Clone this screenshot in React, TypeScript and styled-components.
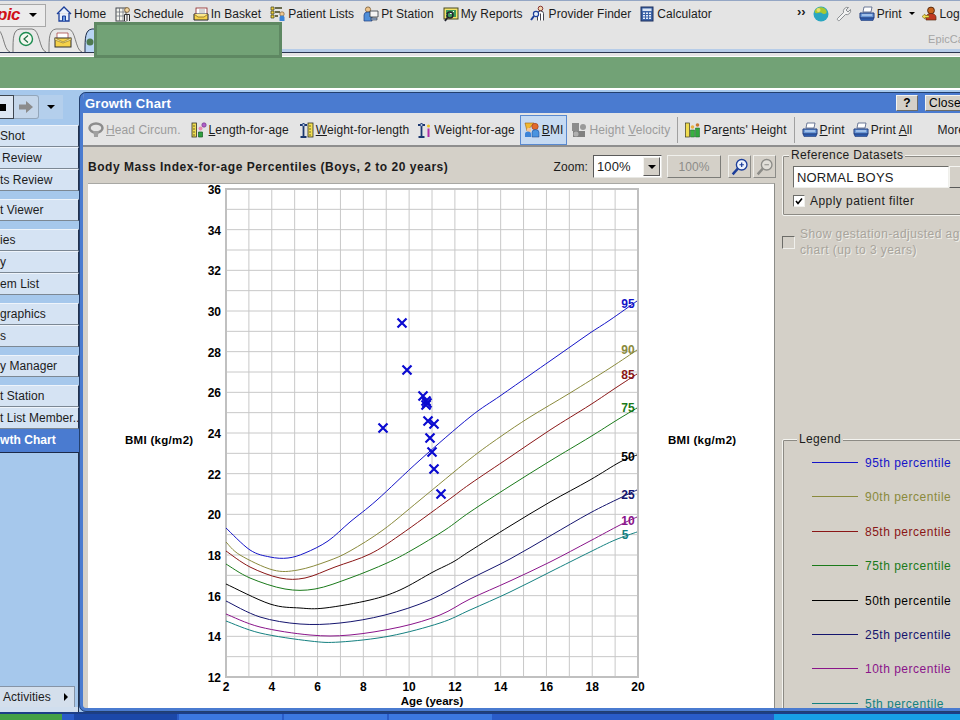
import type { ReactNode } from "react";
import styled, { createGlobalStyle } from "styled-components";

const GlobalStyle = createGlobalStyle`
  html, body {
    margin: 0;
    padding: 0;
    background: #ffffff;
  }
  * {
    box-sizing: border-box;
  }
`;

const Page = styled.div`
  position: relative;
  display: flex;
  flex-direction: column;
  width: 960px;
  height: 720px;
  overflow: hidden;
  font-family: "Liberation Sans", Arial, sans-serif;
  font-size: 12px;
  letter-spacing: 0.1px;
  color: #1c1c1c;
`;

const TopBar = styled.header`
  flex: none;
  height: 57px;
  background: #e4e4e4;
  border-top: 1px solid #94a6c4;
  border-bottom: 1px solid #ffffff;
  display: flex;
  flex-direction: column;
`;

const ToolRow = styled.div`
  height: 25px;
  display: flex;
  align-items: center;
  letter-spacing: 0.05px;
`;

const LogoButton = styled.div`
  flex: none;
  width: 46px;
  height: 23px;
  margin-top: 3px;
  display: flex;
  align-items: center;
  justify-content: space-between;
  padding-right: 8px;
  border: 1px solid #a8a8a8;
  border-left: 0;
  background: #ececec;
  overflow: hidden;
`;

const LogoText = styled.span`
  margin-left: -3px;
  color: #d01018;
  font-size: 17px;
  font-weight: 700;
  font-style: italic;
  letter-spacing: -0.5px;
`;

const Caret = styled.span<{ $size?: number; $color?: string }>`
  flex: none;
  width: 0;
  height: 0;
  border-left: ${({ $size }) => $size ?? 4}px solid transparent;
  border-right: ${({ $size }) => $size ?? 4}px solid transparent;
  border-top: ${({ $size }) => $size ?? 4}px solid ${({ $color }) => $color ?? "#000"};
`;

const NavItems = styled.nav`
  display: flex;
  align-items: center;
  gap: 9px;
  margin-left: 10px;
`;

const NavItem = styled.span<{ $pull?: number }>`
  display: flex;
  align-items: center;
  gap: 2px;
  margin-left: ${({ $pull }) => -($pull ?? 0)}px;
  white-space: nowrap;
`;

const RightTools = styled.div`
  display: flex;
  align-items: center;
  gap: 7px;
  margin-left: 85px;
  white-space: nowrap;
`;

const Chevrons = styled.span`
  font-weight: 700;
  font-size: 13px;
  margin-top: -4px;
`;

const TabRow = styled.div`
  position: relative;
  flex: 1;
  display: flex;
  align-items: flex-end;
`;

const Tabs = styled.div`
  display: flex;
  align-items: flex-end;
  gap: 2px;
  height: 25px;
  margin-left: -10px;
  margin-bottom: 3px;
  border-bottom: 1px solid #2a3550;
`;

const AppName = styled.span`
  position: absolute;
  left: 928px;
  top: 7px;
  color: #a4a4a4;
  font-size: 11px;
  white-space: nowrap;
`;

const TabRule = styled.div`
  flex: 1;
  height: 4px;
  margin-bottom: 3px;
  background: #b6cce8;
  border-bottom: 1px solid #2a3550;
`;

const GreenBand = styled.div`
  flex: none;
  height: 33px;
  background: #72a276;
  border-bottom: 2px solid #ffffff;
`;

const Redaction = styled.div`
  position: absolute;
  left: 94px;
  top: 22px;
  width: 188px;
  height: 36px;
  background: #72a276;
  border: 3px solid #5e8862;
`;

const Main = styled.main`
  flex: 1;
  min-height: 0;
  display: flex;
  background: #a6c8ec;
`;

const Sidebar = styled.aside`
  flex: none;
  width: 79px;
  display: flex;
  flex-direction: column;
  letter-spacing: 0.05px;
`;

const NavStrip = styled.div`
  height: 35px;
  padding-top: 5px;
  display: flex;
  align-items: flex-start;
`;

const StripGroup = styled.div`
  width: 63px;
  height: 24px;
  display: flex;
  align-items: center;
  background: #b4cfec;
`;

const BackButton = styled.span`
  width: 14px;
  height: 24px;
  display: flex;
  align-items: center;
  background: #dce6f2;
  border: 1px solid #3e4650;
  border-left: 0;
`;

const StopMark = styled.span`
  width: 6px;
  height: 7px;
  background: #000;
`;

const ForwardButton = styled.span`
  width: 25px;
  height: 24px;
  display: flex;
  align-items: center;
  justify-content: center;
  background: #c4d6ea;
  border: 1px solid #93a6ba;
  border-left: 0;
  border-radius: 0 3px 3px 0;
`;

const StripCaret = styled.span`
  margin-left: 8px;
  display: flex;
`;

const SideGroup = styled.div`
  display: flex;
  flex-direction: column;
  margin-bottom: 8px;
`;

const SideItem = styled.div<{ $indent?: number }>`
  height: 22px;
  display: flex;
  align-items: center;
  padding-left: ${({ $indent }) => $indent ?? 0}px;
  background: #d5e3f3;
  border-top: 1px solid #eef4fb;
  border-bottom: 1px solid #7c8894;
  border-right: 1px solid #23324e;
  white-space: nowrap;
  overflow: hidden;
`;

const SideActive = styled.div`
  height: 23px;
  margin-top: -8px;
  padding-bottom: 2px;
  display: flex;
  align-items: center;
  background: #4a7bd0;
  color: #ffffff;
  font-weight: 700;
`;

const SideFill = styled.div`
  flex: 1;
  display: flex;
  flex-direction: column;
  justify-content: flex-end;
  border-top: 1px solid #1c2a48;
  border-right: 1px solid #23324e;
  background: #a6c8ec;
`;

const ActivitiesButton = styled.div`
  width: 75px;
  height: 21px;
  padding: 0 6px 0 3px;
  display: flex;
  align-items: center;
  justify-content: space-between;
  background: #d4dfec;
  border-top: 1px solid #8694a6;
  border-right: 1px solid #8694a6;
`;

const ArrowRight = styled.span`
  width: 0;
  height: 0;
  border-top: 4px solid transparent;
  border-bottom: 4px solid transparent;
  border-left: 4px solid #000;
`;

const SideFoot = styled.div`
  height: 5px;
  background: #d0deee;
`;

const GrowthWindow = styled.section`
  flex: none;
  width: 900px;
  margin-top: 2px;
  display: flex;
  flex-direction: column;
  border: 4px solid #4a7bd0;
  border-right: 0;
  border-top: 0;
  border-radius: 7px 0 0 7px;
  outline: 1px solid #23406e;
  outline-offset: -1px;
  background: #d4d0c8;
  overflow: hidden;
`;

const TitleBar = styled.div`
  flex: none;
  height: 21px;
  padding: 0 14px 0 2px;
  display: flex;
  align-items: center;
  background: #4a7bd0;
  color: #ffffff;
  font-size: 13px;
  font-weight: 700;
  letter-spacing: 0.25px;
`;

const TitleText = styled.span`
  flex: 1;
  padding-top: 2px;
`;

const TitleButton = styled.span<{ $wide?: boolean }>`
  width: ${({ $wide }) => ($wide ? 40 : 22)}px;
  height: 16px;
  margin-left: 7px;
  display: flex;
  align-items: center;
  justify-content: center;
  background: #d4d0c8;
  border: 1px solid #f4f4f0;
  border-right-color: #6c6c68;
  border-bottom-color: #6c6c68;
  color: #000;
  font-size: 12px;
  font-weight: ${({ $wide }) => ($wide ? 400 : 700)};
`;

const ChartToolbar = styled.div`
  flex: none;
  height: 34px;
  padding: 1px 0 0 5px;
  display: flex;
  align-items: center;
  background: #e4e4e4;
  border-bottom: 2px solid #8e8e8e;
  white-space: nowrap;
`;

const ChartTool = styled.span<{ $off?: boolean; $active?: boolean; $left?: number }>`
  height: 30px;
  margin-left: ${({ $left }) => $left ?? 8}px;
  padding: ${({ $active }) => ($active ? "0 4px" : "0")};
  display: flex;
  align-items: center;
  gap: 2px;
  color: ${({ $off }) => ($off ? "#9c9c9c" : "#1c1c1c")};
  background: ${({ $active }) => ($active ? "#c6daf2" : "transparent")};
  outline: ${({ $active }) => ($active ? "1px solid #5a8ad0" : "none")};
  outline-offset: -1px;
`;

const ToolDivider = styled.span`
  width: 1px;
  height: 26px;
  margin-left: 7px;
  background: #a0a0a0;
`;

const Content = styled.div`
  flex: 1;
  min-height: 0;
  display: flex;
`;

const ChartColumn = styled.div`
  flex: none;
  width: 693px;
  padding-left: 5px;
  display: flex;
  flex-direction: column;
`;

const ChartHeader = styled.div`
  flex: none;
  height: 36px;
  display: flex;
  align-items: center;
  padding-top: 3px;
`;

const ChartTitle = styled.h1`
  flex: 1;
  margin: 0;
  font-size: 12px;
  font-weight: 700;
  letter-spacing: 0.53px;
`;

const ZoomLabel = styled.span`
  margin-right: 5px;
`;

const ZoomSelect = styled.div`
  width: 69px;
  height: 23px;
  display: flex;
  align-items: center;
  justify-content: space-between;
  padding: 1px 1px 1px 3px;
  background: #fff;
  border: 1px solid #5a5a5a;
  border-right-color: #e8e8e4;
  border-bottom-color: #e8e8e4;
  font-size: 13px;
`;

const SelectArrow = styled.span`
  width: 17px;
  height: 19px;
  display: flex;
  align-items: center;
  justify-content: center;
  background: #d4d0c8;
  border: 1px solid #f4f4f0;
  border-right-color: #5a5a5a;
  border-bottom-color: #5a5a5a;
`;

const ZoomValue = styled.span`
  width: 54px;
  height: 23px;
  margin-left: 5px;
  display: flex;
  align-items: center;
  justify-content: center;
  color: #8c8c88;
  background: #d4d0c8;
  border: 1px solid #f0f0ec;
  border-right-color: #7c7c78;
  border-bottom-color: #7c7c78;
`;

const ZoomButton = styled.span<{ $first?: boolean }>`
  width: 23px;
  height: 23px;
  margin-left: ${({ $first }) => ($first ? 7 : 2)}px;
  display: flex;
  align-items: center;
  justify-content: center;
  border: 1px solid #f0f0ec;
  border-right-color: #8c8c88;
  border-bottom-color: #8c8c88;
`;

const ChartPanel = styled.div`
  flex: 1;
  min-height: 0;
  width: 687px;
  background: #ffffff;
  border-top: 1px solid #a8a8a4;
  border-right: 1px solid #8c8c88;
`;

const ChartSvg = styled.svg`
  display: block;
  font-family: "Liberation Sans", Arial, sans-serif;
  letter-spacing: 0;
`;

const SidePanel = styled.div`
  flex: none;
  width: 190px;
  padding-left: 6px;
  display: flex;
  flex-direction: column;
`;

const GroupBox = styled.div<{ $top: number }>`
  position: relative;
  flex: none;
  margin-top: ${({ $top }) => $top}px;
  border: 1px solid #f4f4f0;
  outline: 1px solid #8c8a84;
  outline-offset: -2px;
  border-radius: 2px;
`;

const GroupLabel = styled.span<{ $left: number }>`
  position: absolute;
  top: -7px;
  left: ${({ $left }) => $left}px;
  padding: 0 2px;
  line-height: 13px;
  background: #d4d0c8;
  white-space: nowrap;
  letter-spacing: 0.35px;
`;

const DatasetBox = styled(GroupBox)`
  height: 61px;
  padding: 10px 0 0 10px;
`;

const DatasetRow = styled.div`
  display: flex;
`;

const DatasetInput = styled.div`
  width: 163px;
  height: 22px;
  padding-left: 3px;
  display: flex;
  align-items: center;
  background: #fff;
  border: 1px solid #6c6c68;
  border-right-color: #f0f0ec;
  border-bottom-color: #f0f0ec;
  font-size: 13px;
  letter-spacing: 0.15px;
`;

const DatasetArrow = styled.span`
  width: 17px;
  height: 22px;
  background: #d4d0c8;
  border: 1px solid #f4f4f0;
  border-right-color: #5a5a5a;
  border-bottom-color: #5a5a5a;
`;

const CheckRow = styled.label<{ $off?: boolean }>`
  display: flex;
  align-items: ${({ $off }) => ($off ? "flex-start" : "center")};
  gap: ${({ $off }) => ($off ? 5 : 5)}px;
  margin-top: ${({ $off }) => ($off ? 0 : 7)}px;
  color: ${({ $off }) => ($off ? "#a8a49c" : "#1c1c1c")};
  text-shadow: ${({ $off }) => ($off ? "1px 1px 0 #efefea" : "none")};
  line-height: 12px;
  white-space: nowrap;
  letter-spacing: 0.45px;
`;

const DisabledOption = styled.div`
  margin-top: 10px;
`;

const DisabledText = styled.span`
  line-height: 16px;
`;

const CheckSquare = styled.span<{ $off?: boolean }>`
  flex: none;
  width: ${({ $off }) => ($off ? 13 : 12)}px;
  height: ${({ $off }) => ($off ? 13 : 12)}px;
  margin-top: ${({ $off }) => ($off ? 10 : 0)}px;
  display: flex;
  align-items: center;
  justify-content: center;
  background: ${({ $off }) => ($off ? "#d4d0c8" : "#ffffff")};
  border: 1px solid #6c6c68;
  border-right-color: #f0f0ec;
  border-bottom-color: #f0f0ec;
`;

const LegendBox = styled(GroupBox)`
  height: 320px;
  padding: 16px 0 0 29px;
`;

const LegendRow = styled.div<{ $color: string }>`
  height: 34.4px;
  display: flex;
  align-items: flex-start;
  gap: 7px;
  line-height: 14px;
  white-space: nowrap;
  letter-spacing: 0.5px;
  color: ${({ $color }) => $color};
`;

const LegendLine = styled.span`
  width: 46px;
  height: 1px;
  margin-top: 6px;
  background: currentColor;
`;

const Taskbar = styled.footer`
  flex: none;
  height: 8px;
  display: flex;
  gap: 2px;
  background: #2a5cc8;
  border-top: 2px solid #1c3e86;
`;

const StartButton = styled.span`
  width: 62px;
  background: #45a045;
`;

const TaskButton = styled.span<{ $dark?: boolean }>`
  width: 103px;
  margin-left: ${({ $dark }) => ($dark ? 10 : 0)}px;
  background: ${({ $dark }) => ($dark ? "#1c48a8" : "#3c78e0")};
`;

const TrayArea = styled.span`
  margin-left: auto;
  width: 186px;
  background: #18a0e6;
`;

type IconProps = { size?: number; children: ReactNode; box?: string };

function Ico({ size = 16, children, box = "0 0 16 16" }: IconProps) {
  return (
    <svg width={size} height={size} viewBox={box} style={{ flex: "none" }}>
      {children}
    </svg>
  );
}

const HomeIcon = () => (
  <Ico>
    <path d="M1 8 8 1l7 7M3 7v8h10V7" fill="#e8f0fa" stroke="#1a3e9a" strokeWidth="1.3" />
    <path d="M6.5 15v-5h3v5" fill="#6a9ae0" stroke="#1a3e9a" />
  </Ico>
);

const ScheduleIcon = () => (
  <Ico>
    <rect x="1" y="2" width="10" height="13" fill="#f4f4ee" stroke="#44484e" />
    <path d="M1 6h10M1 10h10M4.5 2v13M8 2v13" stroke="#70757c" strokeWidth=".8" />
    <circle cx="12" cy="4" r="2.4" fill="#f2d6a0" stroke="#6a4a20" strokeWidth=".8" />
    <path d="M9.5 15V8.5h5V15M12 9v6" fill="#f4f4f4" stroke="#303030" />
  </Ico>
);

const BasketIcon = () => (
  <Ico>
    <rect x="3" y="2" width="11" height="8" fill="#ffffff" stroke="#8a2020" strokeWidth=".8" />
    <path d="M6 4h6M6 6h6" stroke="#8a8a8a" strokeWidth=".7" />
    <path d="M1 8h14v6H1z" fill="#f6d24a" stroke="#24242c" />
    <path d="M1 8l4 3h6l4-3" fill="#fbe78a" stroke="#7a5a10" strokeWidth=".7" />
  </Ico>
);

const ListsIcon = () => (
  <Ico>
    <path d="M1 1h3v3H1zM1 5h3v3H1zM1 9h3v3H1z" fill="#f0d040" stroke="#40401a" strokeWidth=".7" />
    <path d="M5 2h7M5 6h5M5 10h3" stroke="#40401a" strokeWidth="1.6" />
    <circle cx="12" cy="8" r="2.2" fill="#f0c890" stroke="#6a4a20" strokeWidth=".6" />
    <path d="M9.5 15v-3.5a2.5 2 0 0 1 5 0V15z" fill="#3c84d8" />
  </Ico>
);

const StationIcon = () => (
  <Ico>
    <circle cx="5" cy="3.5" r="2.6" fill="#eec48c" stroke="#6a4a20" strokeWidth=".7" />
    <path d="M1 15V9a4 3 0 0 1 8 0v6z" fill="#4f8ed8" stroke="#1c3e80" strokeWidth=".7" />
    <path d="M7 5h8v6H7z" fill="#f4f4f4" stroke="#303840" strokeWidth=".8" />
    <path d="M8 12h6v2H8z" fill="#9ab4d8" stroke="#303840" strokeWidth=".6" />
  </Ico>
);

const ReportsIcon = () => (
  <Ico>
    <rect x="1" y="2" width="14" height="11" fill="#f4e46a" stroke="#4a4a20" />
    <rect x="3" y="4" width="10" height="7" fill="#3c9a5a" />
    <path d="M3 9l3-3 2 2 3-3" stroke="#ffffff" fill="none" />
    <circle cx="7" cy="9" r="3" fill="none" stroke="#20202c" strokeWidth="1.4" />
    <path d="M4.500 11.500 2 15" stroke="#20202c" strokeWidth="1.8" />
  </Ico>
);

const FinderIcon = () => (
  <Ico box="0 0 17 16" size={17}>
    <circle cx="10.500" cy="3" r="2.300" fill="#f4d8b0" stroke="#7a2020" strokeWidth=".9" />
    <path d="M7.500 15V8a3 2.500 0 0 1 6 0v7M10.500 8v7" fill="#fff" stroke="#30303a" strokeWidth=".9" />
    <circle cx="6" cy="8.500" r="2.600" fill="#e8f0fa" stroke="#1c3e9a" strokeWidth="1.200" />
    <path d="M4 10.500 1 14.500" stroke="#1c3e9a" strokeWidth="2" />
  </Ico>
);

const CalculatorIcon = () => (
  <Ico box="0 0 14 16" size={16}>
    <rect x="1" y="1" width="12" height="14" fill="#3c64a8" stroke="#1c2e5c" />
    <rect x="2.500" y="2.500" width="9" height="2.500" fill="#dce6f4" />
    <path d="M3 6.500h2v1.500H3zM6 6.500h2v1.500H6zM9 6.500h2v1.500H9zM3 9h2v1.500H3zM6 9h2v1.500H6zM9 9h2v1.500H9zM3 11.500h2V13H3zM6 11.500h2V13H6zM9 11.500h2V13H9z" fill="#e8eef8" />
  </Ico>
);

const GlobeIcon = () => (
  <Ico>
    <circle cx="8" cy="8" r="7.500" fill="#2aa6c0" />
    <path d="M4 2.500c3-2 8-1.500 9.500 2.500 .7 2-.5 3-2.500 3S9 6 7 6.500 3 8 2 6.500 2.500 3.500 4 2.500z" fill="#a8c830" />
    <circle cx="5.500" cy="4" r="2" fill="#e8e070" />
  </Ico>
);

const WrenchIcon = () => (
  <Ico>
    <path d="M14.500 3.500 12 6l-2-2 2.500-2.500a4 4 0 0 0-5 5L1.500 12.500a1.500 1.500 0 0 0 2 2l6-6a4 4 0 0 0 5-5z" fill="#f2f2f2" stroke="#808488" strokeWidth=".9" />
  </Ico>
);

const PrinterIcon = () => (
  <Ico>
    <path d="M5 1h8l-1 5H4z" fill="#ffffff" stroke="#4a5a80" strokeWidth=".8" />
    <path d="M1 7h14v5H1z" fill="#6c9ad8" stroke="#1e3a7c" />
    <path d="M1 12h14l-1 2.500H2z" fill="#2e5cac" stroke="#1e3a7c" strokeWidth=".6" />
    <path d="M3 9h10" stroke="#d4e4f8" />
  </Ico>
);

const LogoutIcon = () => (
  <Ico>
    <circle cx="9" cy="4.500" r="3.400" fill="#c8641c" stroke="#5a2c10" />
    <path d="M4 14V11a5 3.500 0 0 1 10 0v3z" fill="#c03820" stroke="#5a2c10" strokeWidth=".7" />
    <path d="M0 10.500 3 8v1.500h4v2H3V13z" fill="#f4e050" stroke="#7a6a10" strokeWidth=".6" />
  </Ico>
);

const HeadIcon = () => (
  <Ico>
    <ellipse cx="8" cy="6" rx="6.500" ry="4.500" fill="none" stroke="#8c8c8c" strokeWidth="2.500" />
    <path d="M5 9c1 3 1 5 1 6h4c0-1 0-3 1-6" fill="#a0a0a0" />
  </Ico>
);

const LengthIcon = () => (
  <Ico>
    <rect x="1" y="1" width="4.500" height="14" fill="#f0dc50" stroke="#303020" strokeWidth=".8" />
    <path d="M2 4h2M2 7h2M2 10h2M2 13h2" stroke="#303020" strokeWidth=".7" />
    <circle cx="13" cy="3" r="2.200" fill="#b060c8" stroke="#6a2a80" strokeWidth=".6" />
    <circle cx="9.500" cy="6.500" r="2" fill="#e88ab0" />
    <path d="M7.500 15v-5h4v5z" fill="#30a040" stroke="#145c20" strokeWidth=".7" />
  </Ico>
);

const ScaleIcon = ({ tall }: { tall?: boolean }) => (
  <Ico>
    <path d="M2 3h7M5.500 1v13M2.500 15h6" stroke="#1c3870" strokeWidth="1.800" fill="none" />
    <circle cx="5.500" cy="3" r="1.300" fill="#c0d4f0" stroke="#1c3870" strokeWidth=".6" />
    {tall ? (
      <>
        <circle cx="12.500" cy="4" r="1.500" fill="#e8c020" />
        <path d="M11.500 6.500h2V15h-2z" fill="#b02ca8" />
      </>
    ) : (
      <>
        <rect x="10" y="1" width="5" height="14" fill="#f4e050" stroke="#303020" strokeWidth=".8" />
        <path d="M11 4h2M11 7h2M11 10h2M11 13h2" stroke="#303020" strokeWidth=".7" />
      </>
    )}
  </Ico>
);

const BmiIcon = () => (
  <Ico>
    <path d="M1 1h9L3 9z" fill="#f0b830" stroke="#a06010" strokeWidth=".6" />
    <circle cx="11" cy="4.500" r="3.200" fill="#e06a2c" stroke="#a03818" strokeWidth=".6" />
    <circle cx="5" cy="8" r="2.200" fill="#f4c49a" />
    <path d="M1 15v-3a3 2.500 0 0 1 6 0v3z" fill="#3c84d8" />
    <path d="M8 15v-4.500a3 2.500 0 0 1 7 0V15z" fill="#4a94e0" stroke="#1c3e80" strokeWidth=".5" />
  </Ico>
);

const VelocityIcon = () => (
  <Ico>
    <rect x="1" y="1" width="7" height="8" fill="#8c8c8c" />
    <circle cx="12" cy="5" r="3" fill="#9a9a9a" />
    <path d="M2 15v-6h12v6z" fill="#808080" />
    <circle cx="5" cy="12" r="2.500" fill="#b0b0b0" />
  </Ico>
);

const ParentsIcon = () => (
  <Ico>
    <rect x="0.500" y="1" width="4" height="14" fill="#f0dc50" stroke="#3a3a20" strokeWidth=".7" />
    <circle cx="7.500" cy="5" r="1.800" fill="#e8b040" />
    <path d="M5.500 15V8h4v7z" fill="#38b040" stroke="#145c20" strokeWidth=".5" />
    <circle cx="12.500" cy="3" r="1.800" fill="#c87830" />
    <path d="M10.500 15V6h4v9z" fill="#30a83c" stroke="#145c20" strokeWidth=".5" />
  </Ico>
);

const ZoomIcon = ({ plus }: { plus?: boolean }) => {
  const color = plus ? "#1c3e9a" : "#8c8c88";
  return (
    <Ico size={18}>
      <circle cx="9.500" cy="6" r="4.700" fill={plus ? "#eef4fc" : "#e0ded8"} stroke={color} strokeWidth="1.200" />
      <path d="M6 9.500 1.500 14.500" stroke={color} strokeWidth="2.200" />
      <path d={plus ? "M7.500 6h4M9.500 4v4" : "M7.500 6h4"} stroke={color} strokeWidth="1.100" />
    </Ico>
  );
};

const navItems = [
  { label: "Home", icon: <HomeIcon /> },
  { label: "Schedule", icon: <ScheduleIcon /> },
  { label: "In Basket", icon: <BasketIcon /> },
  { label: "Patient Lists", icon: <ListsIcon /> },
  { label: "Pt Station", icon: <StationIcon /> },
  { label: "My Reports", icon: <ReportsIcon /> },
  { label: "Provider Finder", icon: <FinderIcon />, pull: 2 },
  { label: "Calculator", icon: <CalculatorIcon />, pull: 1 }
];

const sideGroups: { label: string; indent?: number }[][] = [
  [{ label: "Shot" }, { label: "Review", indent: 2 }, { label: "ts Review" }],
  [{ label: "t Viewer" }],
  [{ label: "ies" }, { label: "y" }, { label: "em List" }],
  [{ label: "graphics" }, { label: "s" }],
  [{ label: "y Manager" }],
  [{ label: "t Station" }, { label: "t List Member..." }]
];

// page coordinates of the curves, read off the reference
const curves = [
  {
    tag: "95",
    color: "#1414c8",
    labelX: 628,
    labelY: 304,
    pts: "226,528 250,550 270,557 288,558 305,553 328,541 350,522 377,500 420,460 470,417 500,396 530,375 550,361 570,347 590,333 610,320 637,301"
  },
  {
    tag: "90",
    color: "#8a8a3c",
    labelX: 628,
    labelY: 350,
    pts: "226,542 240,555 273,570 298,570 328,561 350,551 383,530 420,500 470,459 500,437 530,417 570,393 610,368 637,350"
  },
  {
    tag: "85",
    color: "#8a1616",
    labelX: 628,
    labelY: 375,
    pts: "226,551 250,567 280,578 305,578 335,567 370,554 400,535 447,501 470,484 510,457 550,430 590,405 617,387 637,374"
  },
  {
    tag: "75",
    color: "#1a7a1a",
    labelX: 628,
    labelY: 408,
    pts: "226,564 250,578 285,589 315,589 350,578 387,563 412,550 445,530 470,512 510,486 550,461 590,437 617,420 637,408"
  },
  {
    tag: "50",
    color: "#000000",
    labelX: 628,
    labelY: 457,
    pts: "226,584 270,604 300,608 325,608 370,600 400,590 433,572 453,562 470,551 510,526 550,502 590,480 620,462 637,455"
  },
  {
    tag: "25",
    color: "#14146e",
    labelX: 628,
    labelY: 495,
    pts: "226,601 260,617 300,624 340,623 385,615 430,600 470,579 510,559 550,536 590,513 620,498 637,490"
  },
  {
    tag: "10",
    color: "#8a148a",
    labelX: 628,
    labelY: 521,
    pts: "226,614 260,627 310,635 350,635 400,627 440,615 470,599 510,581 550,562 590,541 620,525 637,517"
  },
  {
    tag: "5",
    color: "#148080",
    labelX: 625,
    labelY: 535,
    pts: "226,621 260,633 310,641 340,642 390,636 440,623 470,610 510,592 550,572 590,552 615,540 637,532"
  }
];

// catmull-rom through the read-off points
function smoothPath(pts: string) {
  const p = pts.split(" ").map((s) => s.split(",").map(Number));
  let d = `M${p[0][0]} ${p[0][1]}`;
  for (let i = 0; i < p.length - 1; i++) {
    const a = p[Math.max(i - 1, 0)];
    const b = p[i];
    const c = p[i + 1];
    const e = p[Math.min(i + 2, p.length - 1)];
    const c1 = [b[0] + (c[0] - a[0]) / 6, b[1] + (c[1] - a[1]) / 6];
    const c2 = [c[0] - (e[0] - b[0]) / 6, c[1] - (e[1] - b[1]) / 6];
    d += `C${c1[0]} ${c1[1]} ${c2[0]} ${c2[1]} ${c[0]} ${c[1]}`;
  }
  return d;
}

const marks = [
  [402, 323], [407, 370], [423, 396], [426, 401], [427, 403], [426, 405],
  [428, 421], [434, 424], [383, 428], [430, 438], [432, 452], [434, 469], [441, 494]
];

const legendRows = [
  { label: "95th percentile", color: "#1414c8" },
  { label: "90th percentile", color: "#8a8a3c" },
  { label: "85th percentile", color: "#8a1616" },
  { label: "75th percentile", color: "#1a7a1a" },
  { label: "50th percentile", color: "#000000" },
  { label: "25th percentile", color: "#14146e" },
  { label: "10th percentile", color: "#8a148a" },
  { label: "5th percentile", color: "#148080" }
];

const yTicks = [36, 34, 32, 30, 28, 26, 24, 22, 20, 18, 16, 14, 12];
const xTicks = [2, 4, 6, 8, 10, 12, 14, 16, 18, 20];
const plot = { left: 226, right: 638, top: 189, bottom: 677 };

function GrowthPlot() {
  const cols = Array.from({ length: 19 }, (_, i) => plot.left + (i * (plot.right - plot.left)) / 18);
  const rows = Array.from({ length: 25 }, (_, i) => plot.top + (i * (plot.bottom - plot.top)) / 24);

  return (
    <ChartSvg width="686" height="524" viewBox="88 184 686 524">
      {cols.map((x) => (
        <line key={x} x1={x} x2={x} y1={plot.top} y2={plot.bottom} stroke="#c8c8c8" />
      ))}
      {rows.map((y) => (
        <line key={y} x1={plot.left} x2={plot.right} y1={y} y2={y} stroke="#c8c8c8" />
      ))}
      <rect
        x={plot.left}
        y={plot.top}
        width={plot.right - plot.left}
        height={plot.bottom - plot.top}
        fill="none"
        stroke="#c0c0c0"
        strokeWidth="2"
      />
      {curves.map((c) => (
        <g key={c.tag}>
          <path d={smoothPath(c.pts)} fill="none" stroke={c.color} strokeWidth="1" />
          <text x={c.labelX} y={c.labelY + 4} textAnchor="middle" fontSize="12" fontWeight="700" fill={c.color}>
            {c.tag}
          </text>
        </g>
      ))}
      {marks.map(([x, y]) => (
        <path
          key={`${x}-${y}`}
          d={`M${x - 4.500} ${y - 4.500}l9 9M${x + 4.500} ${y - 4.500}l-9 9`}
          stroke="#0a0ad0"
          strokeWidth="2.200"
        />
      ))}
      {yTicks.map((v, i) => (
        <text key={v} x="221" y={plot.top + (i * (plot.bottom - plot.top)) / 12 + 5} textAnchor="end" fontSize="12" fontWeight="700" fill="#000">
          {v}
        </text>
      ))}
      {xTicks.map((v, i) => (
        <text key={v} x={plot.left + (i * (plot.right - plot.left)) / 9} y="691" textAnchor="middle" fontSize="12" fontWeight="700" fill="#000">
          {v}
        </text>
      ))}
      <text x="432" y="705" textAnchor="middle" fontSize="11.500" fontWeight="700" fill="#000">
        Age (years)
      </text>
      <text x="125" y="444" fontSize="11.500" fontWeight="700" letterSpacing=".3" fill="#000">
        BMI (kg/m2)
      </text>
      <text x="668" y="444" fontSize="11.500" fontWeight="700" letterSpacing=".3" fill="#000">
        BMI (kg/m2)
      </text>
    </ChartSvg>
  );
}

function TabShape({ width, active, children }: { width: number; active?: boolean; children?: ReactNode }) {
  return (
    <svg width={width} height="24" viewBox={`0 0 ${width} 24`} style={{ flex: "none" }}>
      <path
        d={`M1 24C1 10 1 2 8 1H${width - 14}C${width - 6} 1 ${width - 7} 22 ${width} 24`}
        fill={active ? "#b8d4f4" : "#e8e8e8"}
        stroke={active ? "#1c2a48" : "#7c7c7c"}
      />
      {children}
    </svg>
  );
}

export default function App() {
  return (
    <Page>
      <GlobalStyle />
      <TopBar>
        <ToolRow>
          <LogoButton>
            <LogoText>pic</LogoText>
            <Caret />
          </LogoButton>
          <NavItems>
            {navItems.map((item) => (
              <NavItem key={item.label} $pull={item.pull}>
                {item.icon}
                {item.label}
              </NavItem>
            ))}
          </NavItems>
          <RightTools>
            <Chevrons>››</Chevrons>
            <GlobeIcon />
            <WrenchIcon />
            <NavItem>
              <PrinterIcon />
              Print
            </NavItem>
            <Caret $size={3} />
            <NavItem>
              <LogoutIcon />
              Log
            </NavItem>
          </RightTools>
        </ToolRow>
        <TabRow>
          <Tabs>
            <TabShape width={20} />
            <TabShape width={34}>
              <circle cx="14" cy="11" r="6.500" fill="#f4f8f0" stroke="#1c8c50" strokeWidth="1.400" />
              <path d="M16 7.500 12 11l4 3.500" fill="none" stroke="#1c6c40" strokeWidth="1.200" />
            </TabShape>
            <TabShape width={34}>
              <path d="M9 5h11v7H9z" fill="#ffffff" stroke="#a03030" strokeWidth=".7" />
              <rect x="7" y="10" width="16" height="9" fill="#f6d24a" stroke="#303030" />
              <path d="M7 10l8 4 8-4v2l-8 3-8-3z" fill="#fdf0a8" stroke="#705a10" strokeWidth=".5" />
            </TabShape>
            <TabShape width={30} active>
              <circle cx="6" cy="14" r="3.500" fill="#4e7a50" />
            </TabShape>
          </Tabs>
          <TabRule />
          <AppName>EpicCa</AppName>
        </TabRow>
      </TopBar>
      <GreenBand />
      <Main>
        <Sidebar>
          <NavStrip>
            <StripGroup>
              <BackButton>
                <StopMark />
              </BackButton>
              <ForwardButton>
                <svg width="16" height="14" viewBox="0 0 16 14">
                  <path d="M1 4.500h7V1l7 6-7 6V9.500H1z" fill="#8c8c8c" />
                </svg>
              </ForwardButton>
              <StripCaret>
                <Caret />
              </StripCaret>
            </StripGroup>
          </NavStrip>
          {sideGroups.map((group) => (
            <SideGroup key={group[0].label}>
              {group.map((item) => (
                <SideItem key={item.label} $indent={item.indent}>
                  {item.label}
                </SideItem>
              ))}
            </SideGroup>
          ))}
          <SideActive>wth Chart</SideActive>
          <SideFill>
            <ActivitiesButton>
              Activities
              <ArrowRight />
            </ActivitiesButton>
            <SideFoot />
          </SideFill>
        </Sidebar>
        <GrowthWindow>
          <TitleBar>
            <TitleText>Growth Chart</TitleText>
            <TitleButton>?</TitleButton>
            <TitleButton $wide>Close</TitleButton>
          </TitleBar>
          <ChartToolbar>
            <ChartTool $off $left={0}>
              <HeadIcon />
              <span>
                <u>H</u>ead Circum.
              </span>
            </ChartTool>
            <ChartTool $left={10}>
              <LengthIcon />
              <span>
                <u>L</u>ength-for-age
              </span>
            </ChartTool>
            <ChartTool $left={9}>
              <ScaleIcon />
              <span>
                <u>W</u>eight-for-length
              </span>
            </ChartTool>
            <ChartTool $left={7}>
              <ScaleIcon tall />
              <span>
                Weight-for-a<u>g</u>e
              </span>
            </ChartTool>
            <ChartTool $active $left={5}>
              <BmiIcon />
              <span>
                <u>B</u>MI
              </span>
            </ChartTool>
            <ChartTool $off $left={4}>
              <VelocityIcon />
              <span>
                Height <u>V</u>elocity
              </span>
            </ChartTool>
            <ToolDivider />
            <ChartTool $left={7}>
              <ParentsIcon />
              <span>
                Par<u>e</u>nts' Height
              </span>
            </ChartTool>
            <ToolDivider />
            <ChartTool $left={7}>
              <PrinterIcon />
              <span>
                <u>P</u>rint
              </span>
            </ChartTool>
            <ChartTool>
              <PrinterIcon />
              <span>
                Print <u>A</u>ll
              </span>
            </ChartTool>
            <ChartTool $left={25}>More</ChartTool>
          </ChartToolbar>
          <Content>
            <ChartColumn>
              <ChartHeader>
                <ChartTitle>Body Mass Index-for-age Percentiles (Boys, 2 to 20 years)</ChartTitle>
                <ZoomLabel>Zoom:</ZoomLabel>
                <ZoomSelect>
                  100%
                  <SelectArrow>
                    <Caret />
                  </SelectArrow>
                </ZoomSelect>
                <ZoomValue>100%</ZoomValue>
                <ZoomButton $first>
                  <ZoomIcon plus />
                </ZoomButton>
                <ZoomButton>
                  <ZoomIcon />
                </ZoomButton>
              </ChartHeader>
              <ChartPanel>
                <GrowthPlot />
              </ChartPanel>
            </ChartColumn>
            <SidePanel>
              <DatasetBox $top={8}>
                <GroupLabel $left={6}>Reference Datasets</GroupLabel>
                <DatasetRow>
                  <DatasetInput>NORMAL BOYS</DatasetInput>
                  <DatasetArrow />
                </DatasetRow>
                <CheckRow>
                  <CheckSquare>
                    <svg width="10" height="10" viewBox="0 0 10 10">
                      <path d="M2 5l2 2.500L8 2.500" fill="none" stroke="#000" strokeWidth="1.600" />
                    </svg>
                  </CheckSquare>
                  Apply patient filter
                </CheckRow>
              </DatasetBox>
              <DisabledOption>
                <CheckRow $off>
                  <CheckSquare $off />
                  <DisabledText>
                    Show gestation-adjusted age
                    <br />
                    chart (up to 3 years)
                  </DisabledText>
                </CheckRow>
              </DisabledOption>
              <LegendBox $top={181}>
                <GroupLabel $left={14}>Legend</GroupLabel>
                {legendRows.map((row) => (
                  <LegendRow key={row.label} $color={row.color}>
                    <LegendLine />
                    {row.label}
                  </LegendRow>
                ))}
              </LegendBox>
            </SidePanel>
          </Content>
        </GrowthWindow>
      </Main>
      <Taskbar>
        <StartButton />
        <TaskButton $dark />
        <TaskButton />
        <TaskButton />
        <TaskButton />
        <TrayArea />
      </Taskbar>
      <Redaction />
    </Page>
  );
}
